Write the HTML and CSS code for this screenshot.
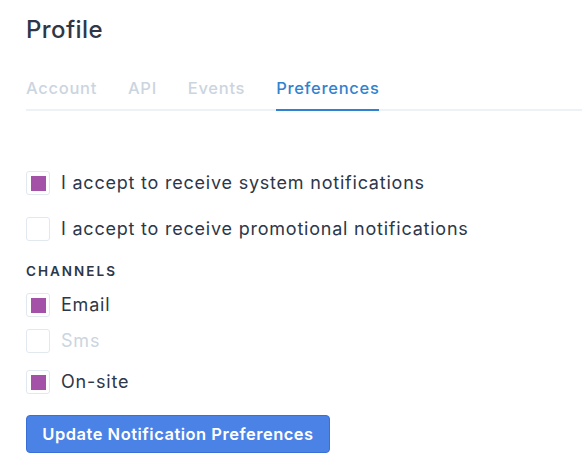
FILE: index.html
```html
<!DOCTYPE html>
<html>
<head>
<meta charset="utf-8">
<link rel="stylesheet" href="styles.css">
</head>
<body>
<div class="page">
  <h1 class="title">Profile</h1>
  <nav class="tabs">
    <a class="tab">Account</a>
    <a class="tab">API</a>
    <a class="tab">Events</a>
    <a class="tab active">Preferences</a>
  </nav>
  <div class="form">
    <label class="row big first"><span class="box checked"></span><span>I accept to receive system notifications</span></label>
    <label class="row big"><span class="box"></span><span>I accept to receive promotional notifications</span></label>
    <div class="section">CHANNELS</div>
    <label class="row ch"><span class="box checked"></span><span>Email</span></label>
    <label class="row ch disabled"><span class="box"></span><span>Sms</span></label>
    <label class="row ch last"><span class="box checked"></span><span>On-site</span></label>
    <button class="btn">Update Notification Preferences</button>
  </div>
</div>
</body>
</html>
```
FILE: styles.css
```css
html, body { margin: 0; padding: 0; background: #fff; }
body { font-family: Inter, "Noto Sans", sans-serif; color: #2d3748; }
.page { padding: 16px 0 0 26px; }
.title { margin: 0; font-size: 24px; font-weight: 500; color: #2d3748; line-height: 28px; letter-spacing: 0.4px; }
.tabs { display: flex; gap: 31px; margin-top: 34px; border-bottom: 2px solid #edf2f7; }
.tab { font-size: 16.5px; font-weight: 500; color: #cbd5e0; padding-bottom: 11px; margin-bottom: -2px; border-bottom: 2px solid transparent; line-height: 20px; letter-spacing: 0.7px; }
.tab.active { color: #3182ce; border-bottom-color: #3182ce; }
.form { padding-top: 60px; }
.row { display: flex; align-items: center; gap: 11px; font-size: 18px; line-height: 24px; letter-spacing: 0.78px; }
.row.big { margin-bottom: 22px; }
.row.ch { margin-bottom: 12px; }
.row.ch.disabled { margin-bottom: 17px; }
.row.last { margin-bottom: 21px; }
.disabled { color: #cbd5e0; }
.box { box-sizing: border-box; width: 24px; height: 24px; border: 1px solid #e2e8f0; border-radius: 3px; display: flex; align-items: center; justify-content: center; flex: none; }
.box.checked::after { content: ""; width: 15px; height: 15px; background: #a452a8; }
.section { font-size: 13.5px; font-weight: 600; letter-spacing: 2px; color: #2d3748; margin: 0 0 14px; line-height: 16px; }
.btn { font-family: inherit; background: #4a82e6; color: #fff; border: 1px solid #3a6fd6; border-radius: 4px; width: 304px; height: 38px; font-size: 16.5px; font-weight: 600; padding: 0; letter-spacing: 0.5px; }
```
